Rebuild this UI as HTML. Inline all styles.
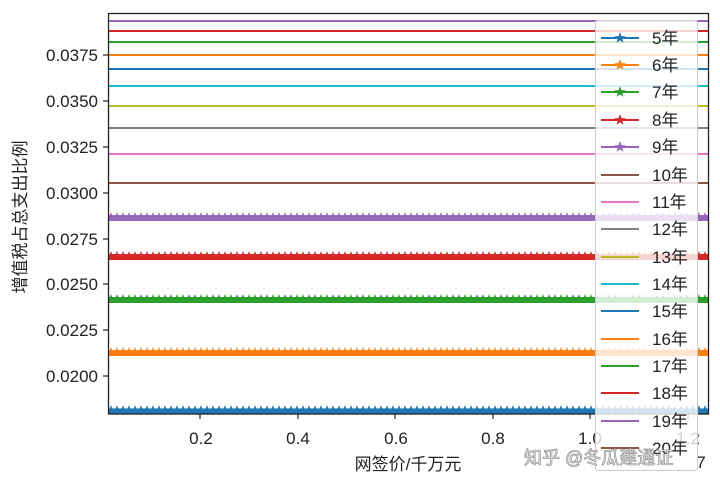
<!DOCTYPE html>
<html><head><meta charset="utf-8"><style>
html,body{margin:0;padding:0;background:#fff;width:720px;height:484px;overflow:hidden}
text{font-family:"Liberation Sans","Noto Sans CJK SC",sans-serif;fill:#222}
</style></head><body>
<svg width="720" height="484" viewBox="0 0 720 484" xmlns="http://www.w3.org/2000/svg">
<defs>
<symbol id="st" viewBox="-5 -5 10 10"><polygon points="0,-5 1.2,-1.6 4.8,-1.5 1.9,0.6 2.9,4 0,2 -2.9,4 -1.9,0.6 -4.8,-1.5 -1.2,-1.6"/></symbol>
<pattern id="pp" x="108" y="0" width="6" height="484" patternUnits="userSpaceOnUse"><use href="#st" x="-2" y="212" width="10" height="10" fill="#9467bd"/></pattern>
<pattern id="pr" x="108" y="0" width="6" height="484" patternUnits="userSpaceOnUse"><use href="#st" x="-2" y="251" width="10" height="10" fill="#d62728"/></pattern>
<pattern id="pg" x="108" y="0" width="6" height="484" patternUnits="userSpaceOnUse"><use href="#st" x="-2" y="294" width="10" height="10" fill="#2ca02c"/></pattern>
<pattern id="po" x="108" y="0" width="6" height="484" patternUnits="userSpaceOnUse"><use href="#st" x="-2" y="347" width="10" height="10" fill="#ff7f0e"/></pattern>
<pattern id="pb" x="108" y="0" width="6" height="484" patternUnits="userSpaceOnUse"><use href="#st" x="-2" y="405" width="10" height="10" fill="#1f77b4"/></pattern>
<clipPath id="ax"><rect x="108" y="13" width="600" height="401"/></clipPath>
</defs>
<g clip-path="url(#ax)" stroke-width="2">
<line x1="108" x2="708" y1="21" y2="21" stroke="#9467bd"/>
<line x1="108" x2="708" y1="31" y2="31" stroke="#d62728"/>
<line x1="108" x2="708" y1="42" y2="42" stroke="#2ca02c"/>
<line x1="108" x2="708" y1="55" y2="55" stroke="#ff7f0e"/>
<line x1="108" x2="708" y1="69" y2="69" stroke="#1f77b4"/>
<line x1="108" x2="708" y1="86" y2="86" stroke="#17becf"/>
<line x1="108" x2="708" y1="106" y2="106" stroke="#bcbd22"/>
<line x1="108" x2="708" y1="128" y2="128" stroke="#7f7f7f"/>
<line x1="108" x2="708" y1="154" y2="154" stroke="#e377c2"/>
<line x1="108" x2="708" y1="183" y2="183" stroke="#8c564b"/>
<rect x="108" y="212" width="600" height="10" fill="url(#pp)"/>
<line x1="108" x2="708" y1="218" y2="218" stroke="#9467bd" stroke-width="6"/>
<rect x="108" y="251" width="600" height="10" fill="url(#pr)"/>
<line x1="108" x2="708" y1="257" y2="257" stroke="#d62728" stroke-width="6"/>
<rect x="108" y="294" width="600" height="10" fill="url(#pg)"/>
<line x1="108" x2="708" y1="300" y2="300" stroke="#2ca02c" stroke-width="6"/>
<rect x="108" y="347" width="600" height="10" fill="url(#po)"/>
<line x1="108" x2="708" y1="353" y2="353" stroke="#ff7f0e" stroke-width="6"/>
<rect x="108" y="405" width="600" height="10" fill="url(#pb)"/>
<line x1="108" x2="708" y1="411" y2="411" stroke="#1f77b4" stroke-width="5"/>
</g>
<rect x="108.5" y="13.5" width="600" height="400.5" fill="none" stroke="#222" stroke-width="1.3"/>
<g stroke="#222" stroke-width="1.2">
<line x1="103" x2="108" y1="55" y2="55"/><line x1="103" x2="108" y1="101" y2="101"/><line x1="103" x2="108" y1="147" y2="147"/><line x1="103" x2="108" y1="193" y2="193"/><line x1="103" x2="108" y1="239" y2="239"/><line x1="103" x2="108" y1="284" y2="284"/><line x1="103" x2="108" y1="330" y2="330"/><line x1="103" x2="108" y1="376" y2="376"/>
<line x1="200" x2="200" y1="414" y2="419"/><line x1="298" x2="298" y1="414" y2="419"/><line x1="395" x2="395" y1="414" y2="419"/><line x1="493" x2="493" y1="414" y2="419"/><line x1="590" x2="590" y1="414" y2="419"/><line x1="688" x2="688" y1="414" y2="419"/>
</g>
<g font-size="17" text-anchor="end">
<text x="98" y="61">0.0375</text><text x="98" y="107">0.0350</text><text x="98" y="153">0.0325</text><text x="98" y="199">0.0300</text><text x="98" y="245">0.0275</text><text x="98" y="290">0.0250</text><text x="98" y="336">0.0225</text><text x="98" y="382">0.0200</text>
</g>
<g font-size="17" text-anchor="middle">
<text x="201" y="444">0.2</text><text x="298" y="444">0.4</text><text x="396" y="444">0.6</text><text x="493" y="444">0.8</text><text x="590" y="444">1.0</text><text x="688" y="444">1.2</text>
<text x="408" y="470">网签价/千万元</text>
</g>
<text x="701" y="468" font-size="17" text-anchor="middle">7</text>
<text transform="translate(26,217) rotate(-90)" font-size="17" text-anchor="middle">增值税占总支出比例</text>
<rect x="595.5" y="20.5" width="102" height="450" rx="2" fill="#fff" fill-opacity="0.8" stroke="#ccc"/>
<g stroke-width="2">
<g fill="#1f77b4" stroke="#1f77b4"><line x1="601" x2="639" y1="38" y2="38"/><use href="#st" x="614" y="32" width="12" height="12" stroke="none"/></g>
<g fill="#ff7f0e" stroke="#ff7f0e"><line x1="601" x2="639" y1="65" y2="65"/><use href="#st" x="614" y="59" width="12" height="12" stroke="none"/></g>
<g fill="#2ca02c" stroke="#2ca02c"><line x1="601" x2="639" y1="92" y2="92"/><use href="#st" x="614" y="86" width="12" height="12" stroke="none"/></g>
<g fill="#d62728" stroke="#d62728"><line x1="601" x2="639" y1="120" y2="120"/><use href="#st" x="614" y="114" width="12" height="12" stroke="none"/></g>
<g fill="#9467bd" stroke="#9467bd"><line x1="601" x2="639" y1="147" y2="147"/><use href="#st" x="614" y="141" width="12" height="12" stroke="none"/></g>
<line x1="601" x2="639" y1="175" y2="175" stroke="#8c564b"/>
<line x1="601" x2="639" y1="202" y2="202" stroke="#e377c2"/>
<line x1="601" x2="639" y1="229" y2="229" stroke="#7f7f7f"/>
<line x1="601" x2="639" y1="257" y2="257" stroke="#bcbd22"/>
<line x1="601" x2="639" y1="284" y2="284" stroke="#17becf"/>
<line x1="601" x2="639" y1="311" y2="311" stroke="#1f77b4"/>
<line x1="601" x2="639" y1="339" y2="339" stroke="#ff7f0e"/>
<line x1="601" x2="639" y1="366" y2="366" stroke="#2ca02c"/>
<line x1="601" x2="639" y1="393" y2="393" stroke="#d62728"/>
<line x1="601" x2="639" y1="421" y2="421" stroke="#9467bd"/>
<line x1="601" x2="639" y1="448" y2="448" stroke="#8c564b"/>
</g>
<g font-size="17">
<text x="652" y="44">5年</text><text x="652" y="71">6年</text><text x="652" y="98">7年</text><text x="652" y="126">8年</text><text x="652" y="153">9年</text><text x="652" y="181">10年</text><text x="652" y="208">11年</text><text x="652" y="235">12年</text><text x="652" y="263">13年</text><text x="652" y="290">14年</text><text x="652" y="317">15年</text><text x="652" y="345">16年</text><text x="652" y="372">17年</text><text x="652" y="399">18年</text><text x="652" y="427">19年</text><text x="652" y="454">20年</text>
</g>
<text x="524" y="464" font-size="18" style="fill:#fff;stroke:#999;stroke-width:0.8">知乎 @冬瓜建通证</text>
</svg>
</body></html>
